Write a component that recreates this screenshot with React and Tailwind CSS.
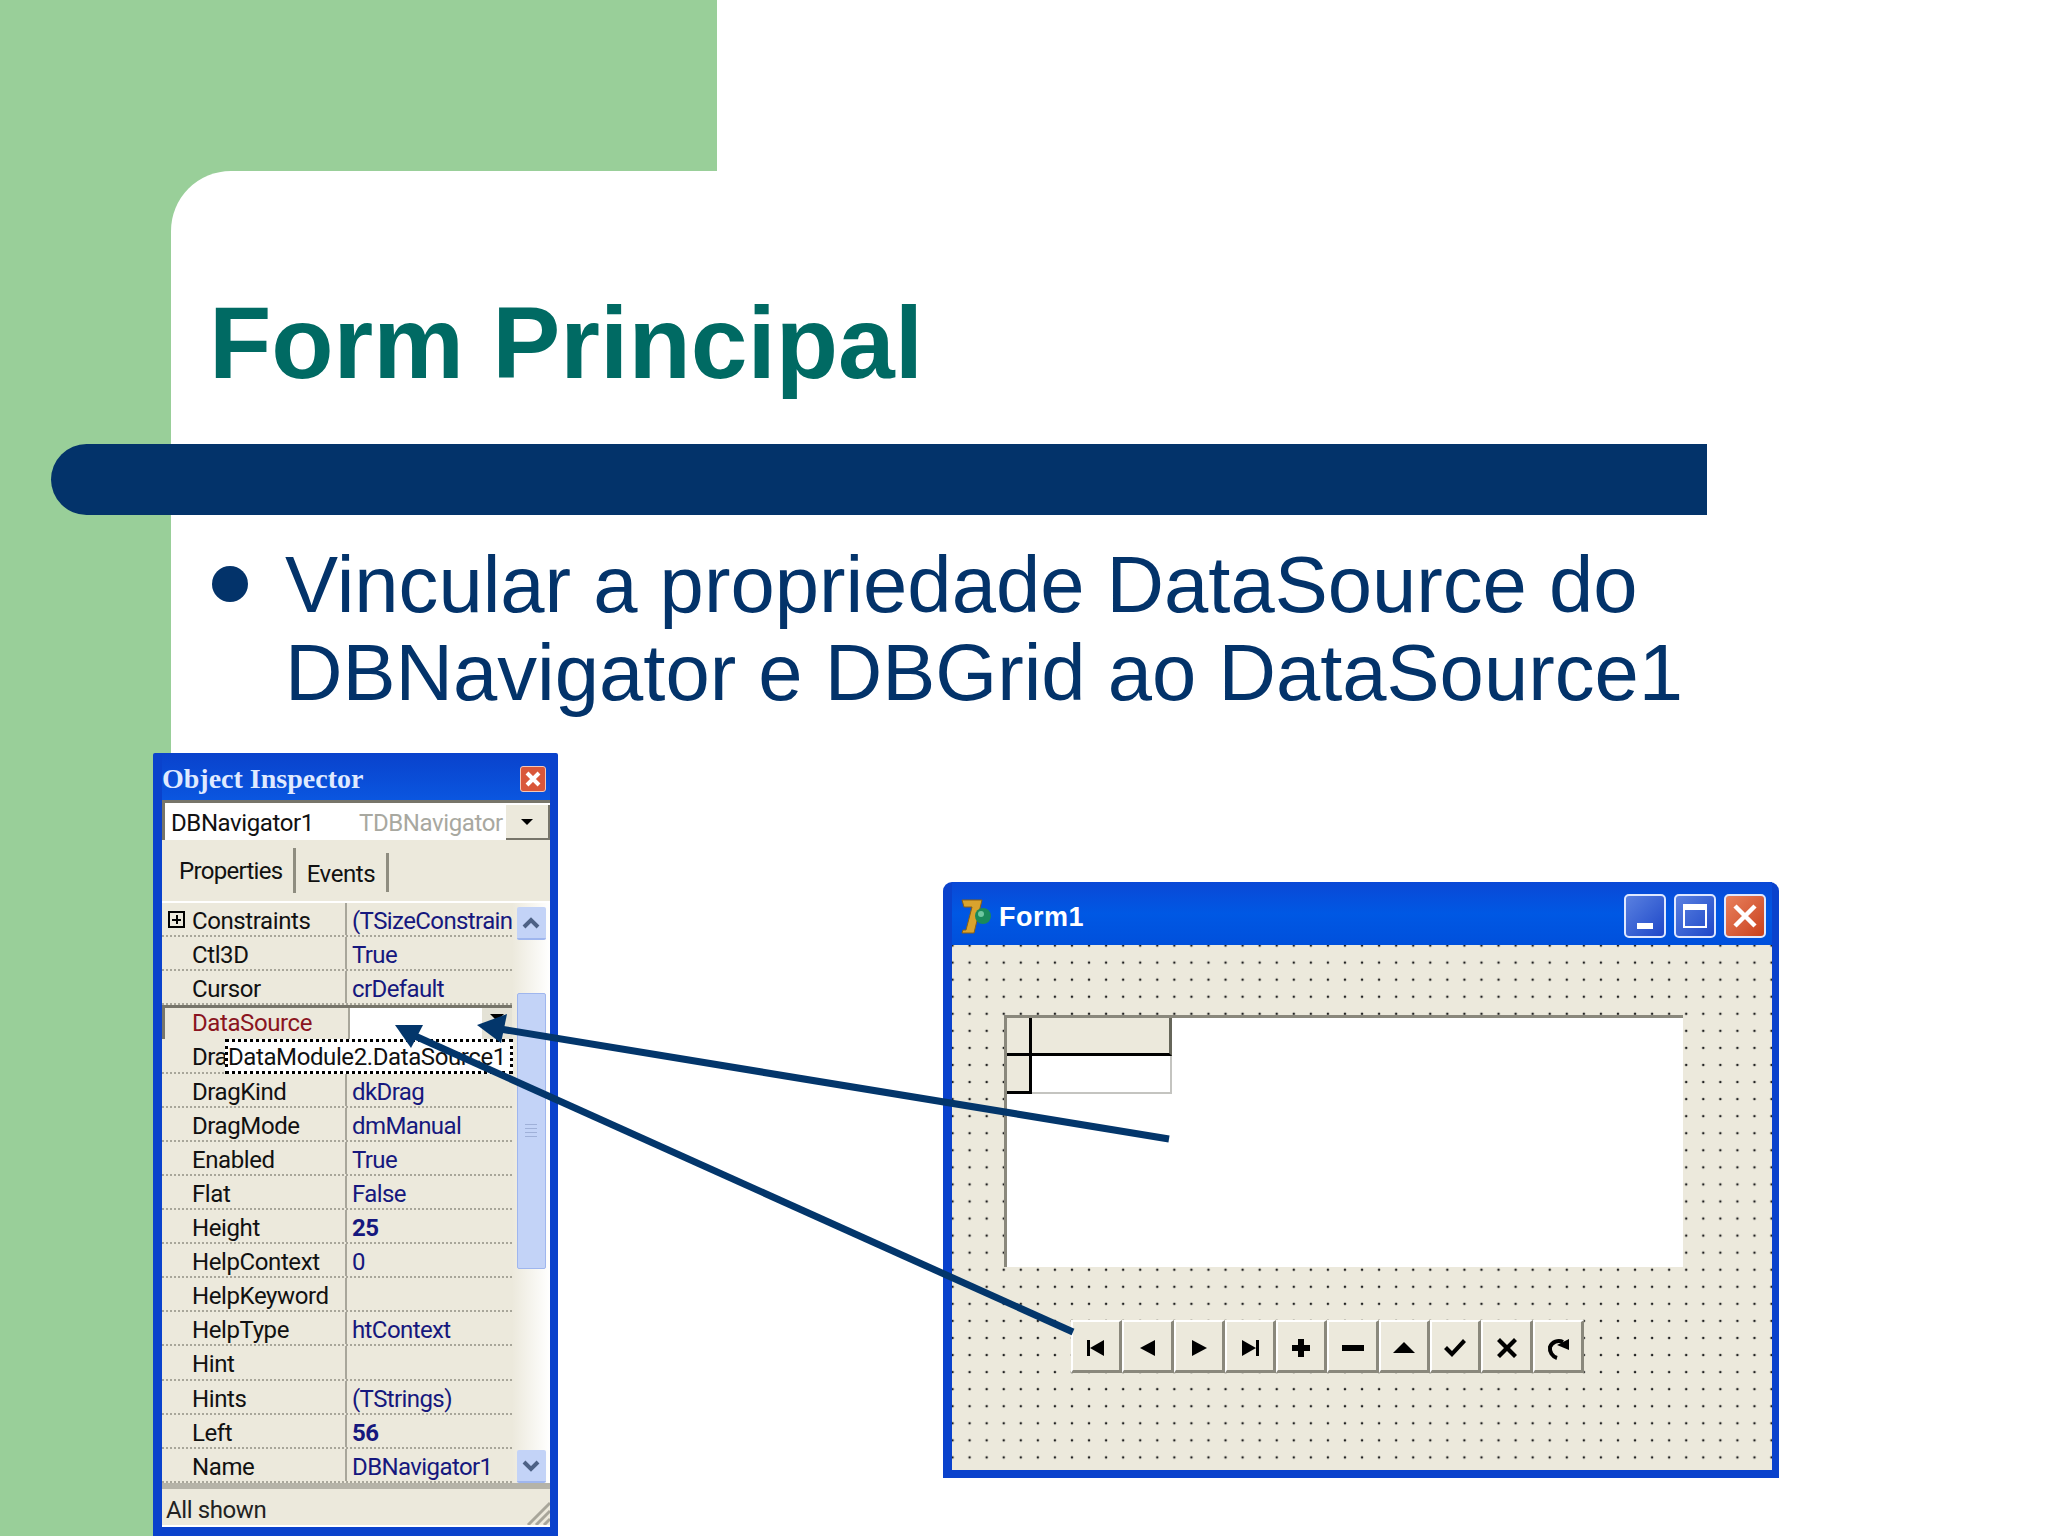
const props = [
  ["Constraints", "(TSizeConstrain", false],
  ["Ctl3D", "True", false],
  ["Cursor", "crDefault", false],
  ["DataSource", "", false],
  ["Dra", "", false],
  ["DragKind", "dkDrag", false],
  ["DragMode", "dmManual", false],
  ["Enabled", "True", false],
  ["Flat", "False", false],
  ["Height", "25", true],
  ["HelpContext", "0", false],
  ["HelpKeyword", "", false],
  ["HelpType", "htContext", false],
  ["Hint", "", false],
  ["Hints", "(TStrings)", false],
  ["Left", "56", true],
  ["Name", "DBNavigator1", false],
];

function PropRow({ name, value, bold }) {
  const selected = name === "DataSource";
  return (
    <div className={`relative flex h-[34.12px] ${selected ? "border-t-[3px] border-l-[3px] border-[#77756a]" : "border-b-2 border-dotted border-[#a8a69a]"}`}>
      <div className={`relative flex w-[185px] items-center border-r-2 border-[#a8a69a] ${selected ? "pb-[2px] pl-[27px] text-[#8a1420]" : "pt-[4px] pl-[30px] text-[#111]"}`}>
        {name === "Constraints" && (
          <span className="absolute left-[6px] top-[8px] flex h-[17px] w-[17px] items-center justify-center border-2 border-black">
            <span className="absolute h-[2px] w-[9px] bg-black" />
            <span className="absolute h-[9px] w-[2px] bg-black" />
          </span>
        )}
        {name}
      </div>
      {selected ? (
        <div className="flex flex-1 justify-end bg-white">
          <div className="flex h-full w-[30px] items-start justify-center bg-[#e4e2d6] pt-[6px]">
            <span className="h-0 w-0 border-x-[7px] border-t-[7px] border-x-transparent border-t-black" />
          </div>
        </div>
      ) : (
        <div className={`flex flex-1 items-center overflow-hidden pt-[4px] pl-[5px] tracking-[-0.6px] whitespace-nowrap text-[#16187e] ${bold ? "font-bold" : ""}`}>{value}</div>
      )}
      {selected && (
        <div className="absolute left-[60px] top-[31px] z-10 flex h-[35px] w-[288px] items-center border-[3px] border-dotted border-black bg-white text-[#111] whitespace-nowrap">
          DataModule2.DataSource1
        </div>
      )}
    </div>
  );
}

function ScrollButton({ down }) {
  return (
    <div className="flex h-[33px] w-[29px] items-center justify-center rounded-[2px] border-b-2 border-[#9fb6ee] bg-[#c3d3f7]">
      <svg width="20" height="14" viewBox="0 0 20 14">
        <path d={down ? "M3 3 L10 10 L17 3" : "M3 11 L10 4 L17 11"} fill="none" stroke="#4d6185" strokeWidth="4" />
      </svg>
    </div>
  );
}

function ObjectInspector() {
  return (
    <div className="flex h-[783px] w-[405px] shrink-0 flex-col rounded-t-[2px] bg-[#0a42cc] pr-[8px] pb-[9px] pl-[9px]">
      <div className="flex h-[47px] shrink-0 items-center justify-between bg-gradient-to-b from-[#0a42cc] to-[#0a56e0] pt-[4px] pr-[4px]">
        <span className="font-['Liberation_Serif',serif] text-[28px] font-bold text-[#dfe9ff]">Object Inspector</span>
        <div className="flex h-[26px] w-[26px] items-center justify-center rounded-[3px] border border-[#f4c8b8] bg-[#d9573a]">
          <svg width="16" height="16" viewBox="0 0 16 16">
            <path d="M2 2 L14 14 M14 2 L2 14" stroke="white" strokeWidth="4" />
          </svg>
        </div>
      </div>
      <div className="flex min-h-0 flex-1 flex-col bg-[#ece9dc] font-['Roboto',sans-serif] text-[24px] leading-none tracking-[-0.4px]">
        <div className="flex h-[40px] shrink-0 items-center border-t-[3px] border-l-[3px] border-[#77756a] bg-white pt-[2px] pl-[6px] text-[#111]">
          <span className="w-[188px]">DBNavigator1</span>
          <span className="w-[147px] text-[#a8a8a0] whitespace-nowrap">TDBNavigator</span>
          <div className="flex h-full flex-1 items-center justify-center border-r-2 border-b-2 border-[#77756a] bg-[#ece9dc]">
            <span className="h-0 w-0 border-x-[6px] border-t-[6px] border-x-transparent border-t-black" />
          </div>
        </div>
        <div className="flex h-[63px] shrink-0 items-start border-b-2 border-white pt-[8px] text-[#111]">
          <div className="flex h-[45px] w-[134px] items-center border-r-[3px] border-[#8f8d80] pl-[17px] tracking-[-0.7px]">Properties</div>
          <div className="mt-[5px] flex h-[39px] w-[93px] items-center justify-center border-r-[3px] border-[#8f8d80] pt-[2px]">Events</div>
        </div>
        <div className="flex h-[580px] shrink-0">
          <div className="flex w-[350px] flex-col">
            {props.map((p) => (
              <PropRow key={p[0]} name={p[0]} value={p[1]} bold={p[2]} />
            ))}
          </div>
          <div className="flex flex-1 flex-col items-center bg-gradient-to-r from-[#ece9dc] to-white pt-[4px]">
            <ScrollButton />
            <div className="h-[53px]" />
            <div className="flex h-[276px] w-[29px] items-center justify-center rounded-[2px] border border-[#9fb6ee] bg-[#c3d3f7]">
              <div className="mt-[-2px] flex flex-col gap-[3px]">
                <span className="block h-[1px] w-[12px] bg-[#9fb0d8]" />
                <span className="block h-[1px] w-[12px] bg-[#9fb0d8]" />
                <span className="block h-[1px] w-[12px] bg-[#9fb0d8]" />
                <span className="block h-[1px] w-[12px] bg-[#9fb0d8]" />
              </div>
            </div>
            <div className="flex-1" />
            <ScrollButton down />
          </div>
        </div>
        <div className="relative flex flex-1 items-center border-t-[6px] border-t-[#b5b3a8] pt-[3px] pl-[4px] text-[#222] shadow-[inset_0_-2px_0_#fff]">
          All shown
          <svg className="absolute right-0 bottom-[2px]" width="24" height="24" viewBox="0 0 24 24">
            <path d="M2 24 L24 2 M10 24 L24 10 M18 24 L24 18" stroke="#a8a69a" strokeWidth="3" />
          </svg>
        </div>
      </div>
    </div>
  );
}

function NavIcon({ i }) {
  const shapes = [
    <path key="f" d="M5 6 H8 V22 H5 Z M8 14 L22 6 V22 Z" />,
    <path key="p" d="M7 14 L22 6 V22 Z" />,
    <path key="n" d="M7 6 L22 14 L7 22 Z" />,
    <path key="l" d="M6 6 L20 14 L6 22 Z M20 6 H23 V22 H20 Z" />,
    <path key="a" d="M11 5 H17 V11 H23 V17 H17 V23 H11 V17 H5 V11 H11 Z" />,
    <path key="m" d="M3 11 H25 V17 H3 Z" />,
    <path key="u" d="M3 19 L14 8 L25 19 Z" />,
    <path key="c" d="M3 15 L6 12 L11 17 L22 5 L25 8 L11 23 Z" />,
    <path key="x" d="M4 7 L7 4 L14 11 L21 4 L24 7 L17 14 L24 21 L21 24 L14 17 L7 24 L4 21 L11 14 Z" />,
    <g key="r">
      <path d="M19 8 A9.5 9.5 0 0 0 6 13 A10 10 0 0 0 13 24" fill="none" stroke="black" strokeWidth="4" />
      <path d="M13 11 L25 5 L25 16 Z" />
    </g>,
  ];
  return (
    <svg width="28" height="28" viewBox="0 0 28 28" fill="black">
      {shapes[i]}
    </svg>
  );
}

function NavButton({ i }) {
  return (
    <div className="flex h-full w-[51.3px] items-center justify-center border-t-2 border-r-[3px] border-b-[3px] border-l-2 border-t-white border-r-[#8a887c] border-b-[#8a887c] border-l-white bg-[#ece9dc] pt-[4px]">
      <NavIcon i={i} />
    </div>
  );
}

function DelphiLogo() {
  return (
    <svg width="34" height="36" viewBox="0 0 34 36">
      <path d="M2 1 H22 L14 34 H2 L3 31 H6 L12 8 H4 Z" fill="#d9a32e" stroke="#8a5f12" strokeWidth="1" />
      <circle cx="23" cy="17" r="8" fill="#1a8a5a" />
      <circle cx="21" cy="15" r="3" fill="#6fc7a0" />
    </svg>
  );
}

function CaptionButton({ close, children }) {
  return (
    <div className={`flex h-[44px] w-[42px] items-center justify-center rounded-[5px] border-2 border-[#dfe8ff] ${close ? "bg-gradient-to-br from-[#e8805c] to-[#c9401a]" : "bg-gradient-to-br from-[#5a80e0] to-[#1f46c8]"}`}>
      {children}
    </div>
  );
}

function FormWindow() {
  return (
    <div className="ml-[385px] mt-[129px] flex h-[596px] w-[836px] shrink-0 flex-col rounded-t-[9px] bg-[#0a42cc] pr-[7px] pb-[8px] pl-[9px]">
      <div className="flex h-[63px] shrink-0 items-center bg-gradient-to-b from-[#0a48d6] via-[#0058e4] to-[#0050dc] pt-[7px] pr-[6px] pl-[8px]">
        <DelphiLogo />
        <span className="ml-[5px] flex-1 font-['Liberation_Sans',sans-serif] text-[27px] font-bold tracking-[0.5px] text-white">Form1</span>
        <div className="flex gap-[8px] pb-[2px]">
          <CaptionButton>
            <span className="mt-[19px] h-[6px] w-[16px] bg-white" />
          </CaptionButton>
          <CaptionButton>
            <span className="h-[24px] w-[24px] border-2 border-t-[6px] border-white" />
          </CaptionButton>
          <CaptionButton close>
            <svg width="26" height="26" viewBox="0 0 26 26">
              <path d="M3 3 L23 23 M23 3 L3 23" stroke="white" strokeWidth="4.5" />
            </svg>
          </CaptionButton>
        </div>
      </div>
      <div className="flex flex-1 flex-col bg-[#ece9dc] bg-[radial-gradient(circle,#222_1px,transparent_1.6px)] bg-[length:17.07px_17.07px] bg-[position:-8px_-8px] pt-[70px] pl-[52px]">
        <div className="h-[252px] w-[679px] border-t-[3px] border-l-[3px] border-[#8a887c] bg-white">
          <div className="flex h-[38px]">
            <div className="w-[25px] border-r-[3px] border-b-[3px] border-black bg-[#ece9dc]" />
            <div className="w-[140px] border-r-[3px] border-b-[3px] border-r-[#66665a] border-b-black bg-[#ece9dc]" />
          </div>
          <div className="flex h-[38px]">
            <div className="w-[25px] border-r-[3px] border-b-[3px] border-black bg-[#ece9dc]" />
            <div className="w-[140px] border-r-2 border-b-2 border-[#c4c4c0] bg-white" />
          </div>
        </div>
        <div className="ml-[67px] mt-[53px] flex h-[53px] w-[513px]">
          {[0, 1, 2, 3, 4, 5, 6, 7, 8, 9].map((i) => (
            <NavButton key={i} i={i} />
          ))}
        </div>
      </div>
    </div>
  );
}

function Arrows() {
  return (
    <svg className="pointer-events-none absolute inset-0 z-20" width="2048" height="1536" viewBox="0 0 2048 1536">
      <line x1="1169" y1="1139" x2="500" y2="1029" stroke="#03366b" strokeWidth="7" />
      <path d="M477 1025 L507 1014 L501 1043 Z" fill="#03366b" />
      <line x1="1073" y1="1332" x2="415" y2="1036" stroke="#03366b" strokeWidth="7" />
      <path d="M395 1025 L423 1025 L411 1048 Z" fill="#03366b" />
    </svg>
  );
}

export default function App() {
  return (
    <div className="relative flex h-[1536px] w-[2048px] flex-col overflow-hidden bg-white font-['Liberation_Sans',sans-serif]">
      <div className="flex h-[171px] shrink-0">
        <div className="w-[717px] bg-[#99cf99]" />
      </div>
      <div className="flex flex-1 bg-[#99cf99] pl-[171px]">
        <div className="flex flex-1 flex-col rounded-tl-[60px] bg-white">
          <h1 className="mt-[114px] ml-[38px] text-[102px] leading-[116px] font-bold text-[#006a63]">Form Principal</h1>
          <div className="-ml-[120px] mt-[43px] h-[71px] w-[1656px] shrink-0 rounded-l-[40px] bg-[#03336a]" />
          <div className="mt-[26px] ml-[41px] flex gap-[37px]">
            <span className="mt-[25px] h-[36px] w-[36px] shrink-0 rounded-full bg-[#03336a]" />
            <p className="text-[79.6px] leading-[88px] text-[#03336a]">
              Vincular a propriedade DataSource do<br />
              DBNavigator e DBGrid ao DataSource1
            </p>
          </div>
          <div className="-ml-[18px] mt-[36px] flex items-start">
            <ObjectInspector />
            <FormWindow />
          </div>
        </div>
      </div>
      <Arrows />
    </div>
  );
}
